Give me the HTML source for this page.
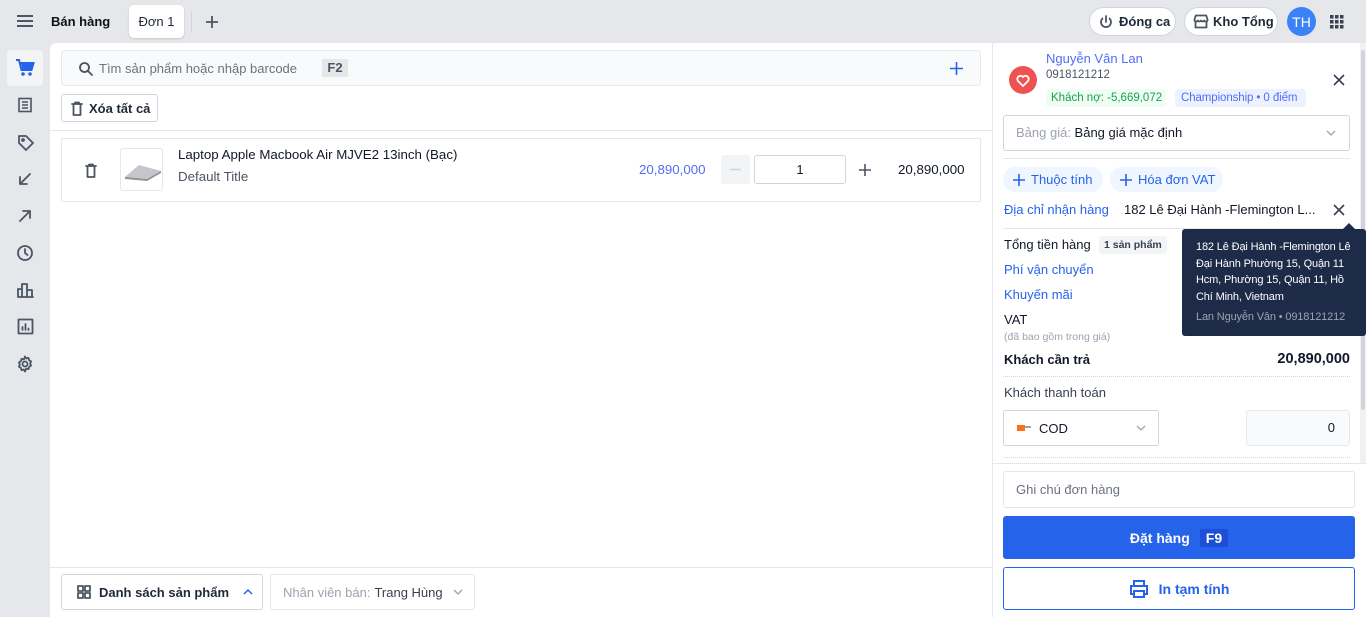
<!DOCTYPE html>
<html><head><meta charset="utf-8"><style>
*{box-sizing:border-box;margin:0;padding:0}
body{width:1366px;height:617px;overflow:hidden;background:#e5e7eb;font-family:"Liberation Sans",sans-serif;color:#111827;position:relative;font-size:13px}
.a{position:absolute;white-space:nowrap}
svg{display:block;flex-shrink:0}
.ic{stroke:#4b5563;fill:none;stroke-width:1.8;stroke-linecap:round;stroke-linejoin:round}
.pill{border:1px solid #d1d5db;background:#fff;border-radius:16px;height:29px;display:flex;align-items:center;gap:5px;padding:0 8px;font-weight:bold;font-size:13px;color:#1f2937}
</style></head><body>
<!-- top bar -->
<svg class="a" style="left:16px;top:14px" width="18" height="14"><path d="M1 2h16M1 7h16M1 12h16" stroke="#374151" stroke-width="1.8"/></svg>
<div class="a" style="left:51px;top:14px;font-size:13px;font-weight:bold;color:#111">Bán hàng</div>
<div class="a" style="left:129px;top:5px;width:55px;height:33px;background:#fff;border-radius:5px;box-shadow:0 1px 2px rgba(0,0,0,.15);font-size:13px;display:flex;align-items:center;justify-content:center;color:#1f2937">Đơn 1</div>
<div class="a" style="left:191px;top:11px;width:1px;height:21px;background:#d1d5db"></div>
<svg class="a" style="left:205px;top:15px" width="14" height="14"><path d="M7 1v12M1 7h12" stroke="#4b5563" stroke-width="1.8"/></svg>
<div class="a pill" style="left:1089px;top:7px;width:87px"><svg width="16" height="16" class="ic"><path d="M8 2v6M4.5 4.5a5 5 0 1 0 7 0"/></svg>Đóng ca</div>
<div class="a pill" style="left:1184px;top:7px;width:94px;gap:4px"><svg width="16" height="15" class="ic"><path d="M1.5 5.5l1.3-4h10.4l1.3 4v1a1.8 1.8 0 0 1-3.3 0a1.8 1.8 0 0 1-3.2 0a1.8 1.8 0 0 1-3.2 0a1.8 1.8 0 0 1-3.3 0zM2.5 8v5.5h11V8"/></svg>Kho Tổng</div>
<div class="a" style="left:1287px;top:7px;width:29px;height:29px;border-radius:50%;background:#3b82f6;color:#fff;font-size:14px;display:flex;align-items:center;justify-content:center">TH</div>
<svg class="a" style="left:1330px;top:15px" width="14" height="14" fill="#374151"><rect x="0" y="0" width="3.5" height="3.5"/><rect x="5" y="0" width="3.5" height="3.5"/><rect x="10" y="0" width="3.5" height="3.5"/><rect x="0" y="5" width="3.5" height="3.5"/><rect x="5" y="5" width="3.5" height="3.5"/><rect x="10" y="5" width="3.5" height="3.5"/><rect x="0" y="10" width="3.5" height="3.5"/><rect x="5" y="10" width="3.5" height="3.5"/><rect x="10" y="10" width="3.5" height="3.5"/></svg>

<!-- sidebar -->
<div class="a" style="left:7px;top:50px;width:36px;height:36px;background:#f3f4f6;border-radius:4px"></div>
<svg class="a" style="left:15px;top:59px" width="20" height="18" fill="#2563eb"><path d="M1 1h3l2.5 10h10l2-7H5.5" stroke="#2563eb" stroke-width="2" fill="none"/><path d="M6 4h13l-2 7H7.5z"/><circle cx="8" cy="15" r="1.8"/><circle cx="15" cy="15" r="1.8"/></svg>
<svg class="a" style="left:17px;top:97px" width="16" height="16"><rect x="2" y="1.5" width="12" height="13" stroke="#4b5563" fill="none" stroke-width="1.6"/><path d="M5 5h6M5 8h6M5 11h6" stroke="#4b5563" stroke-width="1.4"/></svg>
<svg class="a ic" style="left:17px;top:134px" width="18" height="18"><path d="M2 2h7l7 7-7 7-7-7z"/><circle cx="6" cy="6" r="1"/></svg>
<svg class="a ic" style="left:18px;top:172px" width="14" height="14"><path d="M12 2L2 12M2 5v7h7"/></svg>
<svg class="a ic" style="left:18px;top:209px" width="14" height="14"><path d="M2 12L12 2M5 2h7v7"/></svg>
<svg class="a ic" style="left:16px;top:244px" width="18" height="18"><circle cx="9" cy="9" r="7"/><path d="M9 5v4l2.5 2"/></svg>
<svg class="a ic" style="left:16px;top:281px" width="18" height="18"><path d="M2 16h15M2 16V8h4v8M6 16V3h5v13M11 16V9h5v7"/></svg>
<svg class="a ic" style="left:17px;top:318px" width="17" height="17"><rect x="1.5" y="1.5" width="14" height="14"/><path d="M5.5 12V9M8.5 12V6M11.5 12v-1.5"/></svg>
<svg class="a ic" style="left:16px;top:355px" width="18" height="18"><circle cx="9" cy="9" r="2.5"/><path d="M9 1.5l1.2 2 2.3-.6.6 2.3 2 1.2-1 2.1 1 2.1-2 1.2-.6 2.3-2.3-.6L9 16.5l-1.2-2-2.3.6-.6-2.3-2-1.2 1-2.1-1-2.1 2-1.2.6-2.3 2.3.6z"/></svg>

<!-- main -->
<div class="a" style="left:50px;top:43px;width:942px;height:574px;background:#fff;border-radius:6px 0 0 0"></div>
<div class="a" style="left:61px;top:50px;width:920px;height:36px;border:1px solid #e5e7eb;border-radius:4px;background:#f9fafb"></div>
<svg class="a ic" style="left:79px;top:62px" width="14" height="14"><circle cx="5.5" cy="5.5" r="4.5"/><path d="M9 9l4 4"/></svg>
<div class="a" style="left:99px;top:61px;font-size:13px;color:#6b7280">Tìm sản phẩm hoặc nhập barcode</div>
<div class="a" style="left:322px;top:59px;width:26px;height:18px;background:#e5e7eb;border-radius:2px;font-size:13px;font-weight:bold;color:#4b5563;text-align:center;line-height:18px">F2</div>
<svg class="a" style="left:950px;top:62px" width="13" height="13"><path d="M6.5 0v13M0 6.5h13" stroke="#2563eb" stroke-width="1.6"/></svg>
<div class="a" style="left:61px;top:94px;width:97px;height:28px;border:1px solid #d1d5db;border-radius:3px;display:flex;align-items:center;gap:6px;padding-left:9px;font-weight:bold;font-size:13px;color:#1f2937"><svg width="12" height="15" class="ic"><path d="M1 3h10M4 3V1.5h4V3M2.5 3v11h7V3"/></svg>Xóa tất cả</div>
<div class="a" style="left:50px;top:130px;width:942px;height:1px;background:#e5e7eb"></div>
<div class="a" style="left:61px;top:138px;width:920px;height:64px;border:1px solid #e5e7eb;border-radius:2px"></div>
<svg class="a ic" style="left:85px;top:163px" width="12" height="15"><path d="M1 3h10M4 3V1.5h4V3M2.5 3v11h7V3"/></svg>
<div class="a" style="left:120px;top:148px;width:43px;height:43px;border:1px solid #e5e7eb;border-radius:3px;overflow:hidden"><svg width="43" height="43"><path d="M4 28l14-12 22 6-14 8z" fill="#c4c6ca"/><path d="M4 28l22 2 14-8v2L26 32 4 30z" fill="#8e9196"/></svg></div>
<div class="a" style="left:178px;top:147px;font-size:13.3px;color:#111827">Laptop Apple Macbook Air MJVE2 13inch (Bạc)</div>
<div class="a" style="left:178px;top:169px;font-size:13.3px;color:#4b5563">Default Title</div>
<div class="a" style="left:639px;top:162px;font-size:13.3px;color:#4f6ef7">20,890,000</div>
<div class="a" style="left:721px;top:155px;width:29px;height:29px;background:#f3f4f6;border-radius:3px"><svg width="29" height="29"><path d="M9 14.5h11" stroke="#d1d5db" stroke-width="1.5"/></svg></div>
<div class="a" style="left:754px;top:155px;width:92px;height:29px;border:1px solid #d1d5db;border-radius:3px;text-align:center;line-height:27px;font-size:13px">1</div>
<svg class="a" style="left:859px;top:164px" width="12" height="12"><path d="M6 0v12M0 6h12" stroke="#4b5563" stroke-width="1.6"/></svg>
<div class="a" style="left:898px;top:162px;font-size:13.3px">20,890,000</div>
<div class="a" style="left:50px;top:567px;width:942px;height:1px;background:#e5e7eb"></div>
<div class="a" style="left:61px;top:574px;width:202px;height:36px;border:1px solid #d1d5db;border-radius:3px;display:flex;align-items:center;padding-left:15px;gap:8px;font-weight:bold;font-size:13px;color:#1f2937"><svg width="14" height="14" class="ic"><rect x="1" y="1" width="5" height="5"/><rect x="8" y="1" width="5" height="5"/><rect x="1" y="8" width="5" height="5"/><rect x="8" y="8" width="5" height="5"/></svg>Danh sách sản phẩm<svg width="10" height="8" style="margin-left:6px"><path d="M1 6l4-4 4 4" stroke="#2563eb" stroke-width="1.5" fill="none"/></svg></div>
<div class="a" style="left:270px;top:574px;width:205px;height:36px;border:1px solid #e5e7eb;border-radius:3px;display:flex;align-items:center;padding-left:12px;gap:4px;font-size:13px;color:#9ca3af">Nhân viên bán: <span style="color:#374151">Trang Hùng</span><svg width="10" height="8" style="margin-left:6px"><path d="M1 2l4 4 4-4" stroke="#9ca3af" stroke-width="1.3" fill="none"/></svg></div>

<!-- right panel -->
<div class="a" style="left:993px;top:43px;width:373px;height:574px;background:#fff"></div>
<div class="a" style="left:1360px;top:43px;width:6px;height:420px;background:#f1f1f1"></div>
<div class="a" style="left:1361px;top:50px;width:4px;height:360px;background:#d1d5db;border-radius:2px"></div>
<div class="a" style="left:1009px;top:66px;width:28px;height:28px;border-radius:50%;background:#f05252"><svg width="28" height="28"><path d="M14 20l-5-5a3 3 0 0 1 5-4a3 3 0 0 1 5 4z" stroke="#fff" stroke-width="1.8" fill="none"/></svg></div>
<div class="a" style="left:1046px;top:51px;font-size:13px;color:#4f6ef7">Nguyễn Vân Lan</div>
<div class="a" style="left:1046px;top:69px;font-size:11.5px;color:#4b5563">0918121212</div>
<div class="a" style="left:1046px;top:89px;width:120px;height:18px;padding-left:5px;background:#f0fdf4;color:#16a34a;font-size:11.5px;line-height:18px;border-radius:3px">Khách nợ: -5,669,072</div>
<div class="a" style="left:1175px;top:89px;width:131px;height:18px;padding-left:6px;background:#eef2ff;color:#4f6ef7;font-size:11.5px;line-height:18px;border-radius:3px;letter-spacing:-.1px">Championship • 0 điểm</div>
<svg class="a" style="left:1333px;top:74px" width="12" height="12"><path d="M1 1l10 10M11 1L1 11" stroke="#374151" stroke-width="1.6"/></svg>
<div class="a" style="left:1003px;top:115px;width:347px;height:36px;border:1px solid #d1d5db;border-radius:3px;padding-left:12px;line-height:34px;font-size:13px"><span style="color:#9ca3af">Bảng giá:</span> Bảng giá mặc định</div>
<svg class="a" style="left:1326px;top:130px" width="10" height="7"><path d="M1 1l4 4 4-4" stroke="#9ca3af" stroke-width="1.3" fill="none"/></svg>
<div class="a" style="left:1003px;top:158px;width:347px;height:1px;background:#e5e7eb"></div>
<div class="a" style="left:1003px;top:167px;width:100px;height:25px;background:#eff6ff;border-radius:12px;color:#2563eb;font-size:13px;display:flex;align-items:center;gap:6px;padding-left:10px"><svg width="12" height="12"><path d="M6 0v12M0 6h12" stroke="#2563eb" stroke-width="1.6"/></svg>Thuộc tính</div>
<div class="a" style="left:1110px;top:167px;width:113px;height:25px;background:#eff6ff;border-radius:12px;color:#2563eb;font-size:13px;display:flex;align-items:center;gap:6px;padding-left:10px"><svg width="12" height="12"><path d="M6 0v12M0 6h12" stroke="#2563eb" stroke-width="1.6"/></svg>Hóa đơn VAT</div>
<div class="a" style="left:1004px;top:202px;font-size:13px;color:#2563eb">Địa chỉ nhận hàng</div>
<div class="a" style="left:1124px;top:202px;font-size:13px;color:#111827">182 Lê Đại Hành -Flemington L...</div>
<svg class="a" style="left:1333px;top:204px" width="12" height="12"><path d="M1 1l10 10M11 1L1 11" stroke="#374151" stroke-width="1.6"/></svg>
<div class="a" style="left:1003px;top:228px;width:347px;height:1px;background:#e5e7eb"></div>
<div class="a" style="left:1004px;top:237px;font-size:13px">Tổng tiền hàng</div>
<div class="a" style="left:1099px;top:236px;height:18px;padding:0 5px;background:#f3f4f6;font-size:10.5px;font-weight:bold;line-height:18px;border-radius:3px;color:#374151">1 sản phẩm</div>
<div class="a" style="left:1004px;top:262px;font-size:13px;color:#2563eb">Phí vận chuyển</div>
<div class="a" style="left:1004px;top:287px;font-size:13px;color:#2563eb">Khuyến mãi</div>
<div class="a" style="left:1004px;top:312px;font-size:13px">VAT</div>
<div class="a" style="left:1004px;top:331px;font-size:10.5px;color:#9ca3af">(đã bao gồm trong giá)</div>
<div class="a" style="left:1004px;top:352px;font-size:13px;font-weight:bold">Khách cần trả</div>
<div class="a" style="right:16px;top:351px;font-size:14.5px;font-weight:bold">20,890,000</div>
<div class="a" style="left:1003px;top:376px;width:347px;border-top:1px dotted #d1d5db"></div>
<div class="a" style="left:1004px;top:385px;font-size:13px;color:#374151">Khách thanh toán</div>
<div class="a" style="left:1003px;top:410px;width:156px;height:36px;border:1px solid #d1d5db;border-radius:3px;display:flex;align-items:center;padding-left:13px;gap:6px;font-size:13px"><svg width="16" height="10"><rect x="0" y="2" width="8" height="6" fill="#f97316"/><rect x="8" y="3" width="6" height="2" fill="#9ca3af"/></svg>COD</div>
<svg class="a" style="left:1136px;top:425px" width="10" height="7"><path d="M1 1l4 4 4-4" stroke="#9ca3af" stroke-width="1.3" fill="none"/></svg>
<div class="a" style="left:1246px;top:410px;width:104px;height:36px;border:1px solid #e5e7eb;background:#f9fafb;border-radius:3px;text-align:right;padding-right:14px;line-height:34px;font-size:13px">0</div>
<div class="a" style="left:1003px;top:457px;width:347px;border-top:1px dotted #d1d5db"></div>
<div class="a" style="left:993px;top:463px;width:373px;height:1px;background:#e5e7eb"></div>
<div class="a" style="left:1003px;top:471px;width:352px;height:37px;border:1px solid #e5e7eb;border-radius:3px;padding-left:12px;line-height:35px;font-size:13px;color:#6b7280">Ghi chú đơn hàng</div>
<div class="a" style="left:1003px;top:516px;width:352px;height:43px;background:#2563eb;border-radius:3px;color:#fff;font-weight:bold;font-size:14px;display:flex;align-items:center;justify-content:center;gap:10px">Đặt hàng <span style="background:#1d4ed8;padding:1px 6px;border-radius:2px">F9</span></div>
<div class="a" style="left:1003px;top:567px;width:352px;height:43px;border:1px solid #2563eb;border-radius:3px;color:#2563eb;font-weight:bold;font-size:14px;display:flex;align-items:center;justify-content:center;gap:10px"><svg width="20" height="18" fill="none" stroke="#2563eb" stroke-width="2"><path d="M5 6V1h10v5M5 14H2V6h16v8h-3M5 11h10v6H5z"/></svg>In tạm tính</div>

<!-- tooltip -->
<div class="a" style="left:1182px;top:229px;width:184px;height:107px;background:#1e2b48;border-radius:3px;padding:10px 0 0 14px;color:#fff;font-size:11px;line-height:16.5px;letter-spacing:-.15px">182 Lê Đại Hành -Flemington Lê<br>Đại Hành Phường 15, Quận 11<br>Hcm, Phường 15, Quận 11, Hồ<br>Chí Minh, Vietnam<div style="color:#9ca3af;margin-top:4px">Lan Nguyễn Vân • 0918121212</div></div>
<div class="a" style="left:1343px;top:223px;width:0;height:0;border-left:6px solid transparent;border-right:6px solid transparent;border-bottom:6px solid #1e2b48"></div>
</body></html>
